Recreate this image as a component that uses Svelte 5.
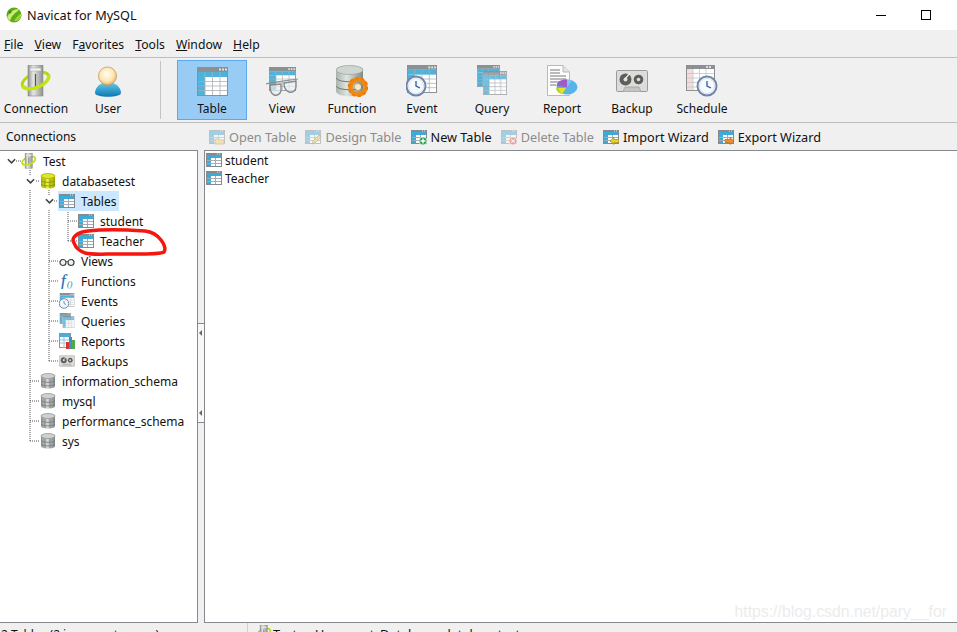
<script>
  const menu = [
    ['', 'F', 'ile'],
    ['', 'V', 'iew'],
    ['F', 'a', 'vorites'],
    ['', 'T', 'ools'],
    ['', 'W', 'indow'],
    ['', 'H', 'elp']
  ];

  const mainTools = [
    { label: 'Table', icon: 'tbl', active: true },
    { label: 'View', icon: 'view' },
    { label: 'Function', icon: 'func' },
    { label: 'Event', icon: 'event' },
    { label: 'Query', icon: 'query' },
    { label: 'Report', icon: 'report' },
    { label: 'Backup', icon: 'backup' },
    { label: 'Schedule', icon: 'schedule' }
  ];

  const subTools = [
    { label: 'Open Table', icon: 'b-open', off: true },
    { label: 'Design Table', icon: 'b-design', off: true },
    { label: 'New Table', icon: 'b-new' },
    { label: 'Delete Table', icon: 'b-delete', off: true },
    { label: 'Import Wizard', icon: 'b-import' },
    { label: 'Export Wizard', icon: 'b-export' }
  ];

  const tree = [
    { label: 'Test', icon: 'conn', level: 0, open: true },
    { label: 'databasetest', icon: 'db-on', level: 1, open: true },
    { label: 'Tables', icon: 'stbl', level: 2, open: true, selected: true },
    { label: 'student', icon: 'stbl', level: 3 },
    { label: 'Teacher', icon: 'stbl', level: 3 },
    { label: 'Views', icon: 'glasses', level: 2 },
    { label: 'Functions', icon: 'fn', level: 2 },
    { label: 'Events', icon: 'event', level: 2 },
    { label: 'Queries', icon: 'query', level: 2 },
    { label: 'Reports', icon: 's-report', level: 2 },
    { label: 'Backups', icon: 'backup', level: 2 },
    { label: 'information_schema', icon: 'db-off', level: 1 },
    { label: 'mysql', icon: 'db-off', level: 1 },
    { label: 'performance_schema', icon: 'db-off', level: 1 },
    { label: 'sys', icon: 'db-off', level: 1 }
  ];

  const tables = ['student', 'Teacher'];

  // dotted connectors of the tree, in page coordinates
  const guides = [
    'M30 170V175', 'M30 190V441', 'M49 190V195', 'M49 210V361', 'M68 210V241',
    'M16 161H21', 'M36 181H40', 'M54 201H59', 'M68 221H78', 'M68 241H78',
    'M49 261H59', 'M49 281H59', 'M49 301H59', 'M49 321H59', 'M49 341H59', 'M49 361H59',
    'M30 381H40', 'M30 401H40', 'M30 421H40', 'M30 441H40'
  ];
</script>

{#snippet clock(cx, cy)}
  <circle {cx} {cy} r="9.5" fill="#fff" stroke="#6f86a8" stroke-width="2" />
  <circle {cx} {cy} r="7.6" fill="#f6f9fd" stroke="#c3cfdf" stroke-width=".6" />
  <path d="M{cx} {cy - 5}V{cy}L{cx + 4} {cy + 2}" fill="none" stroke="#2d5f9a" stroke-width="1.3" />
{/snippet}

{#snippet bigTable(x, y, w, h)}
  <svg {x} {y} width={w} height={h} viewBox="0 0 31 29" preserveAspectRatio="none">
    <rect width="31" height="29" fill="#8b9094" />
    <rect x="22" y="1.5" width="2" height="2" fill="#dfe2e4" />
    <rect x="25" y="1.5" width="2" height="2" fill="#dfe2e4" />
    <rect x="28" y="1.5" width="2" height="2" fill="#dfe2e4" />
    <rect x="1" y="5" width="29" height="23" fill="#fff" />
    <rect x="1" y="5" width="29" height="5" fill="#4cb3dc" />
    <rect x="1" y="10" width="7" height="18" fill="#4cb3dc" />
    <path d="M8 14.500H30M8 19H30M8 23.500H30M1 14.500H8M1 19H8M1 23.500H8M8 5V28M15.500 5V28M23 5V28" stroke="#a9b0b5" stroke-width=".8" fill="none" />
  </svg>
{/snippet}

<svg class="defs" aria-hidden="true">
  <defs>
    <linearGradient id="g-metal" x1="0" x2="1" y1="0" y2="0">
      <stop offset="0" stop-color="#8f9291" />
      <stop offset=".35" stop-color="#e6e7e4" />
      <stop offset="1" stop-color="#8d908e" />
    </linearGradient>
    <linearGradient id="g-drum" x1="0" x2="1" y1="0" y2="0">
      <stop offset="0" stop-color="#a9b4ad" />
      <stop offset=".4" stop-color="#dfe5e0" />
      <stop offset="1" stop-color="#7f8a84" />
    </linearGradient>
    <linearGradient id="g-yellow" x1="0" x2="1" y1="0" y2="0">
      <stop offset="0" stop-color="#a6b400" />
      <stop offset=".45" stop-color="#eef33c" />
      <stop offset="1" stop-color="#97a300" />
    </linearGradient>
    <linearGradient id="g-grey" x1="0" x2="1" y1="0" y2="0">
      <stop offset="0" stop-color="#8b8f8f" />
      <stop offset=".45" stop-color="#d6d8d8" />
      <stop offset="1" stop-color="#7f8383" />
    </linearGradient>
    <radialGradient id="g-head" cx=".45" cy=".4" r=".65">
      <stop offset="0" stop-color="#fffdf3" />
      <stop offset=".6" stop-color="#fde6b4" />
      <stop offset="1" stop-color="#e8ab5a" />
    </radialGradient>
    <linearGradient id="g-body" x1="0" x2="0" y1="0" y2="1">
      <stop offset="0" stop-color="#6fcbe6" />
      <stop offset="1" stop-color="#0879b4" />
    </linearGradient>

    <symbol id="conn" viewBox="0 0 32 32">
      <ellipse cx="15.500" cy="15.500" rx="14" ry="7" fill="none" stroke="#b4d90a" stroke-width="3" transform="rotate(-22 15.500 15.500)" />
      <rect x="8" y="0" width="15" height="31" fill="url(#g-metal)" stroke="#8a8d8c" stroke-width=".6" />
      <rect x="10" y="3" width="11" height="3" fill="#f1f2ef" stroke="#a4a7a5" stroke-width=".5" />
      <path d="M15.500 9V23" stroke="#55585a" stroke-width="1.200" />
      <path d="M1.500 15.500A14 7 0 0 0 29.500 15.500" fill="none" stroke="#c3e40f" stroke-width="3.400" transform="rotate(-22 15.500 15.500)" />
    </symbol>

    <symbol id="user" viewBox="0 0 32 32">
      <path d="M3 28C3 22 9 17 16 17S29 22 29 28C29 33 3 33 3 28Z" fill="url(#g-body)" />
      <circle cx="15.500" cy="11" r="9" fill="url(#g-head)" stroke="#c59a58" stroke-width=".8" />
    </symbol>

    <symbol id="tbl" viewBox="0 0 32 32">
      {@render bigTable(1, 2, 31, 29)}
    </symbol>

    <symbol id="view" viewBox="0 0 32 32">
      {@render bigTable(3, 2, 27, 24)}
      <path d="M0 19C6 17 26 15 32 14" fill="none" stroke="#8b9093" stroke-width="1.200" />
      <path d="M4 20L15 19L15 25C15 29 11 31 8 30C5 29 4 25 4 20Z" fill="#e8ecee" fill-opacity=".7" stroke="#858a8d" stroke-width="1.400" />
      <path d="M18 18L30 16L30 22C30 26 26 28 23 27C20 26 18 23 18 18Z" fill="#e8ecee" fill-opacity=".7" stroke="#858a8d" stroke-width="1.400" />
    </symbol>

    <symbol id="func" viewBox="0 0 32 32">
      <path d="M0 5C0 -1 27 -1 27 5V26C27 33 0 33 0 26Z" fill="url(#g-drum)" />
      <ellipse cx="13.500" cy="5" rx="13.500" ry="4.500" fill="#cfd6d1" stroke="#8e9a93" stroke-width=".6" />
      <path d="M0 13C2 18 25 18 27 13M0 21C2 26 25 26 27 21" fill="none" stroke="#6f7a74" stroke-width="1" />
      <circle cx="22" cy="22" r="7.500" fill="none" stroke="#ee8a12" stroke-width="4.500" />
      <circle cx="22" cy="22" r="9" fill="none" stroke="#ee7a0c" stroke-width="2.500" stroke-dasharray="3 2.650" />
      <circle cx="22" cy="22" r="3" fill="#fbe9c4" />
    </symbol>

    <symbol id="event" viewBox="0 0 32 32">
      {@render bigTable(1, 0, 30, 28)}
      {@render clock(10, 21)}
    </symbol>

    <symbol id="query" viewBox="0 0 32 32">
      {@render bigTable(1, 0, 23, 22)}
      <g opacity=".8">{@render bigTable(7, 6, 24, 24)}</g>
    </symbol>

    <symbol id="report" viewBox="0 0 32 32">
      <path d="M1.500 .5H17L23.500 7V30.500H1.500Z" fill="#fdfdfc" stroke="#b9bbb9" />
      <path d="M17 .5V7H23.500" fill="#e2e4e4" stroke="#b9bbb9" />
      <path d="M4 5H14M4 8H14M4 11H20M4 14H20M4 17H16M4 20H10" stroke="#77797b" stroke-width="1" />
      <ellipse cx="21" cy="22" rx="10.500" ry="7.500" fill="#56b4e8" />
      <path d="M21 22L10.500 21C11 16 16 14 21 14.500Z" fill="#a05bc8" />
      <path d="M21 22L26 15.500C23 14.500 22 14.500 21 14.500Z" fill="#7fc6ee" />
      <path d="M20 23L10 23C10.500 26 12 28 16 29Z" fill="#b7d31d" />
      <path d="M12 23L20 23L16 29Z" fill="#e9de34" />
    </symbol>

    <symbol id="backup" viewBox="0 0 32 32">
      <rect x=".5" y="5.500" width="31" height="21" rx="1" fill="#dcdcda" stroke="#9b9c9a" />
      <path d="M7 26.500L9 22H23L25 26.500" fill="#c4c5c3" stroke="#9b9c9a" stroke-width=".7" />
      <circle cx="9.500" cy="14.500" r="6" fill="#5f5d59" />
      <circle cx="9.500" cy="14.500" r="2" fill="#dedfdc" />
      <path d="M9 14L14 8" stroke="#efefed" stroke-width="1.200" />
      <circle cx="22.500" cy="14.500" r="4.800" fill="#5f5d59" />
      <circle cx="22.500" cy="14.500" r="1.800" fill="#dedfdc" />
    </symbol>

    <symbol id="schedule" viewBox="0 0 32 32">
      <rect width="29" height="26" fill="#8d9092" />
      <rect x="1" y="4" width="27" height="21" fill="#fff" />
      <rect x="1" y="4" width="6" height="21" fill="#f6dcdc" />
      <path d="M1 8.500H28M1 13H28M1 17.500H28M1 22H28M7 4V25M13.500 4V25M20 4V25" stroke="#c2c6c8" stroke-width=".8" />
      <rect x="20" y="1" width="2" height="2" fill="#dfe2e4" />
      <rect x="23" y="1" width="2" height="2" fill="#dfe2e4" />
      {@render clock(21, 21)}
    </symbol>

    <symbol id="stbl" viewBox="0 0 16 16">
      <rect x="0" y="1" width="16" height="14" fill="#858a8e" />
      <rect x="11" y="1.500" width="1" height="1" fill="#e0e3e5" />
      <rect x="13" y="1.500" width="1" height="1" fill="#e0e3e5" />
      <rect x="1" y="3" width="14" height="11" fill="#fff" />
      <rect x="1" y="3" width="14" height="3" fill="#3fa9d8" />
      <rect x="1" y="6" width="4" height="8" fill="#3fa9d8" />
      <path d="M5 8.500H15M5 11.500H15M9.500 6V14M1 8.500H5M1 11.500H5" stroke="#a5acb1" stroke-width="1" />
    </symbol>

    <symbol id="db-on" viewBox="0 0 16 16">
      <path d="M1 3C1 -.5 15 -.5 15 3V13C15 16.500 1 16.500 1 13Z" fill="url(#g-yellow)" />
      <ellipse cx="8" cy="3" rx="7" ry="2.500" fill="#dde628" stroke="#9aa600" stroke-width=".6" />
      <path d="M1 7.500C3 10 13 10 15 7.500M1 11C3 13.500 13 13.500 15 11M5 6V15M10 6V15" fill="none" stroke="#7d8700" stroke-width=".7" />
    </symbol>

    <symbol id="db-off" viewBox="0 0 16 16">
      <path d="M1 3C1 -.5 15 -.5 15 3V13C15 16.500 1 16.500 1 13Z" fill="url(#g-grey)" />
      <ellipse cx="8" cy="3" rx="7" ry="2.500" fill="#cfd1d1" stroke="#868a8a" stroke-width=".6" />
      <path d="M1 7.500C3 10 13 10 15 7.500M1 11C3 13.500 13 13.500 15 11M5 6V15M10 6V15" fill="none" stroke="#6f7373" stroke-width=".7" />
    </symbol>

    <symbol id="glasses" viewBox="0 0 16 16">
      <circle cx="4" cy="9.500" r="3" fill="#eef2f4" stroke="#3f4448" stroke-width="1.200" />
      <circle cx="12" cy="9.500" r="3" fill="#eef2f4" stroke="#3f4448" stroke-width="1.200" />
      <path d="M7 9C7.500 8 8.500 8 9 9M1 8.500L3 6M15 8.500L13 6" fill="none" stroke="#3f4448" stroke-width="1" />
    </symbol>

    <symbol id="fn" viewBox="0 0 16 16">
      <text x="2" y="13" class="fn-text">f</text>
      <text x="8" y="14" class="fn-par">()</text>
    </symbol>

    <symbol id="s-report" viewBox="0 0 16 16">
      <rect x=".5" y=".5" width="11" height="14" fill="#fff" stroke="#8f9497" />
      <rect x="1" y="1" width="10" height="3" fill="#4aaedb" />
      <path d="M1 7H11M1 10H11M5 4V15" stroke="#9fc4d8" stroke-width="1" />
      <rect x="7" y="9" width="3" height="7" fill="#d7382c" />
      <rect x="10" y="4" width="3" height="12" fill="#3d8fd1" />
      <rect x="13" y="7" width="3" height="9" fill="#55a83a" />
    </symbol>

    <symbol id="b-open" viewBox="0 0 16 16">
      <use href="#stbl" width="16" height="16" />
      <path d="M6 10H10L11 11H15V15H6Z" fill="#f5d27a" stroke="#b08a2e" stroke-width=".8" />
    </symbol>
    <symbol id="b-design" viewBox="0 0 16 16">
      <use href="#stbl" width="16" height="16" />
      <path d="M7 15L8 12L14 6L16 8L10 14Z" fill="#e6c252" stroke="#91701c" stroke-width=".7" />
    </symbol>
    <symbol id="b-new" viewBox="0 0 16 16">
      <use href="#stbl" width="16" height="16" />
      <circle cx="12" cy="12" r="4" fill="#26a04a" stroke="#fff" stroke-width=".7" />
      <path d="M12 9.500V14.500M9.500 12H14.500" stroke="#fff" stroke-width="1.400" />
    </symbol>
    <symbol id="b-delete" viewBox="0 0 16 16">
      <use href="#stbl" width="16" height="16" />
      <circle cx="12" cy="12" r="4" fill="#e0403a" stroke="#fff" stroke-width=".7" />
      <path d="M10.300 10.300L13.700 13.700M13.700 10.300L10.300 13.700" stroke="#fff" stroke-width="1.200" />
    </symbol>
    <symbol id="b-import" viewBox="0 0 16 16">
      <use href="#stbl" width="16" height="16" />
      <path d="M7 12L11 8.500V10.500H16V13.500H11V15.500Z" fill="#ecd21e" stroke="#8f7c08" stroke-width=".6" />
    </symbol>
    <symbol id="b-export" viewBox="0 0 16 16">
      <use href="#stbl" width="16" height="16" />
      <path d="M16 12L12 8.500V10.500H7V13.500H12V15.500Z" fill="#f0902a" stroke="#a85a08" stroke-width=".6" />
    </symbol>
  </defs>
</svg>

<div class="app">
  <header class="titlebar">
    <svg class="logo" viewBox="0 0 16 16">
      <circle cx="8" cy="8" r="7.500" fill="#5faa18" />
      <path d="M1 11C3 5 8 2 14 2C11 5 6 7 4 14Z" fill="#cdeb7a" />
      <path d="M8 14C10 11 12 8 15 6.500C16 11 12 15 8 14Z" fill="#9ed63e" />
      <circle cx="4" cy="5" r="1.500" fill="#3f8a10" />
    </svg>
    <span class="title">Navicat for MySQL</span>
    <div class="winctl">
      <span class="btn"><i class="min"></i></span>
      <span class="btn"><i class="max"></i></span>
    </div>
  </header>

  <nav class="menu">
    {#each menu as [before, key, after]}
      <span>{before}<u>{key}</u>{after}</span>
    {/each}
  </nav>

  <div class="toolbar">
    <button class="tool wide">
      <svg class="big"><use href="#conn" /></svg>
      <span>Connection</span>
    </button>
    <button class="tool wide">
      <svg class="big"><use href="#user" /></svg>
      <span>User</span>
    </button>
    <div class="sep"></div>
    {#each mainTools as tool}
      <button class="tool" class:active={tool.active}>
        <svg class="big"><use href={`#${tool.icon}`} /></svg>
        <span>{tool.label}</span>
      </button>
    {/each}
  </div>

  <div class="subbar">
    <div class="subtitle">Connections</div>
    <div class="subtools">
      {#each subTools as tool}
        <button class="subtool" class:off={tool.off}>
          <svg class="small"><use href={`#${tool.icon}`} /></svg>
          <span>{tool.label}</span>
        </button>
      {/each}
    </div>
  </div>

  <main class="main">
    <aside class="tree">
      <svg class="guides" viewBox="0 151 197 470">
        {#each guides as d}
          <path {d} />
        {/each}
      </svg>
      {#each tree as row}
        <div class="row" style="padding-left: {2 + row.level * 19}px">
          <span class="chev">
            {#if row.open}
              <svg viewBox="0 0 10 6"><path d="M1 1L5 5L9 1" /></svg>
            {/if}
          </span>
          <span class="node" class:selected={row.selected}>
            <svg class="small"><use href={`#${row.icon}`} /></svg>
            <span>{row.label}</span>
          </span>
        </div>
      {/each}
      <svg class="scribble" viewBox="0 151 197 470">
        <path d="M73 240C74 235 80 232 88 231C105 229 130 230 145 231C153 232 158 236 161 240C164 244 166 249 164 252C160 255 135 254 115 254C105 254 92 255 85 253C80 251 76 248 75 245C74 243 73 241 73 240Z" />
      </svg>
    </aside>

    <div class="splitter">
      <div class="grip"><i></i><i></i></div>
    </div>

    <section class="list">
      {#each tables as name}
        <div class="item">
          <svg class="small"><use href="#stbl" /></svg>
          <span>{name}</span>
        </div>
      {/each}
      <div class="watermark">https://blog.csdn.net/pary__for</div>
    </section>
  </main>

  <footer class="status">
    <div class="count">2 Tables (2 in current group)</div>
    <div class="info">
      <svg class="small"><use href="#conn" /></svg>
      <div class="fields">
        <span>Test</span>
        <span>User: root</span>
        <span>Database: databasetest</span>
      </div>
    </div>
  </footer>
</div>

<style>
  :global(body) {
    margin: 0;
    background: #fff;
  }

  .defs {
    position: absolute;
    width: 0;
    height: 0;
  }

  .app {
    display: flex;
    flex-direction: column;
    height: 632px;
    overflow: hidden;
    font-family: "Noto Sans", "Open Sans", sans-serif;
    font-size: 12px;
    color: #111;
    background: #f0f0f0;
  }

  .titlebar {
    display: flex;
    align-items: center;
    flex: none;
    height: 30px;
    padding-left: 6px;
    background: #fff;
  }

  .logo {
    width: 16px;
    height: 16px;
  }

  .title {
    margin-left: 5px;
    font-size: 12.7px;
  }

  .winctl {
    display: flex;
    margin-left: auto;
    margin-right: 9px;
  }

  .btn {
    display: flex;
    align-items: center;
    justify-content: center;
    width: 45px;
    height: 30px;
  }

  .min {
    width: 10px;
    height: 1px;
    background: #000;
  }

  .max {
    box-sizing: border-box;
    width: 10px;
    height: 10px;
    border: 1px solid #000;
  }

  .menu {
    display: flex;
    align-items: center;
    flex: none;
    gap: 11px;
    box-sizing: border-box;
    height: 28px;
    padding: 1px 0 0 4px;
    border-bottom: 1px solid #bdbdbd;
    font-size: 12.2px;
  }

  .toolbar {
    display: flex;
    flex: none;
    box-sizing: border-box;
    height: 65px;
    padding-top: 2px;
    border-bottom: 1px solid #bdbdbd;
  }

  button {
    margin: 0;
    border: 0;
    background: none;
    font: inherit;
    color: inherit;
  }

  .tool {
    display: flex;
    flex-direction: column;
    align-items: center;
    box-sizing: border-box;
    width: 70px;
    height: 60px;
    padding: 4px 0 0;
    border: 1px solid transparent;
  }

  .tool.wide {
    width: 72px;
  }

  .tool span {
    margin-top: 3px;
    line-height: 18px;
  }

  .tool.active {
    background: #99ccf5;
    border-color: #5aa9ee;
  }

  .big {
    flex: none;
    width: 32px;
    height: 32px;
  }

  .sep {
    flex: none;
    width: 1px;
    height: 58px;
    margin: 1px 16px 0;
    background: #c4c4c4;
  }

  .subbar {
    display: flex;
    align-items: center;
    flex: none;
    height: 27px;
  }

  .subtitle {
    box-sizing: border-box;
    width: 209px;
    padding-left: 6px;
  }

  .subtools {
    display: flex;
    gap: 9px;
  }

  .subtool {
    display: flex;
    align-items: center;
    gap: 4px;
    padding: 0;
    font-size: 12.7px;
    line-height: 18px;
  }

  .subtool.off {
    color: #8c8c8c;
  }

  .subtool.off svg {
    opacity: 0.45;
  }

  .small {
    flex: none;
    width: 16px;
    height: 16px;
  }

  .main {
    display: flex;
    flex: none;
    height: 473px;
  }

  .tree {
    position: relative;
    box-sizing: border-box;
    width: 198px;
    border-top: 1px solid #868a8e;
    border-right: 1px solid #868a8e;
    border-bottom: 1px solid #868a8e;
    background: #fff;
  }

  .guides,
  .scribble {
    position: absolute;
    top: 0;
    left: 0;
    width: 197px;
    height: 470px;
    pointer-events: none;
  }

  .guides path {
    fill: none;
    stroke: #555;
    stroke-dasharray: 1 1;
  }

  .scribble path {
    fill: none;
    stroke: #f5170f;
    stroke-width: 3.5;
  }

  .row {
    position: relative;
    display: flex;
    align-items: center;
    height: 20px;
  }

  .chev {
    display: flex;
    align-items: center;
    justify-content: center;
    flex: none;
    width: 19px;
  }

  .chev svg {
    width: 9px;
    height: 6px;
    fill: none;
    stroke: #444;
    stroke-width: 1.8;
  }

  .node {
    display: flex;
    align-items: center;
    gap: 6px;
    height: 20px;
    padding-right: 3px;
    white-space: nowrap;
  }

  .node.selected {
    margin-left: -1px;
    padding-left: 1px;
    background: #cce8ff;
  }

  :global(.fn-text) {
    font: italic 16px "Liberation Serif", serif;
    fill: #2468b2;
    stroke: #2468b2;
    stroke-width: 0.2;
  }

  :global(.fn-par) {
    font: italic 8px "Liberation Serif", serif;
    fill: #2468b2;
  }

  .splitter {
    flex: none;
    width: 6px;
    padding-top: 173px;
  }

  .grip {
    display: flex;
    flex-direction: column;
    justify-content: space-between;
    box-sizing: border-box;
    height: 100px;
    padding: 6px 0 6px 1px;
    border-top: 1px solid #868a8e;
    border-bottom: 1px solid #868a8e;
    background: #f8f8f8;
  }

  .grip i {
    width: 0;
    height: 0;
    border-top: 3px solid transparent;
    border-bottom: 3px solid transparent;
    border-right: 3px solid #666;
  }

  .list {
    position: relative;
    flex: 1;
    box-sizing: border-box;
    padding: 0 0 0 1px;
    border: 1px solid #868a8e;
    border-right: 0;
    background: #fff;
  }

  .item {
    display: flex;
    align-items: center;
    gap: 3px;
    height: 18px;
  }

  .watermark {
    position: absolute;
    right: 10px;
    bottom: 0;
    font-family: "Liberation Sans", sans-serif;
    font-size: 15.8px;
    line-height: 20px;
    color: #ececec;
  }

  .status {
    display: flex;
    flex: none;
    height: 20px;
  }

  .count {
    box-sizing: border-box;
    width: 248px;
    padding: 3px 0 0 1px;
    border-right: 1px solid #d0d0d0;
  }

  .info {
    display: flex;
    gap: 1px;
    padding: 2px 0 0 8px;
  }

  .fields {
    display: grid;
    grid-template-columns: 42px 65px auto;
    font-size: 12.7px;
  }
</style>
